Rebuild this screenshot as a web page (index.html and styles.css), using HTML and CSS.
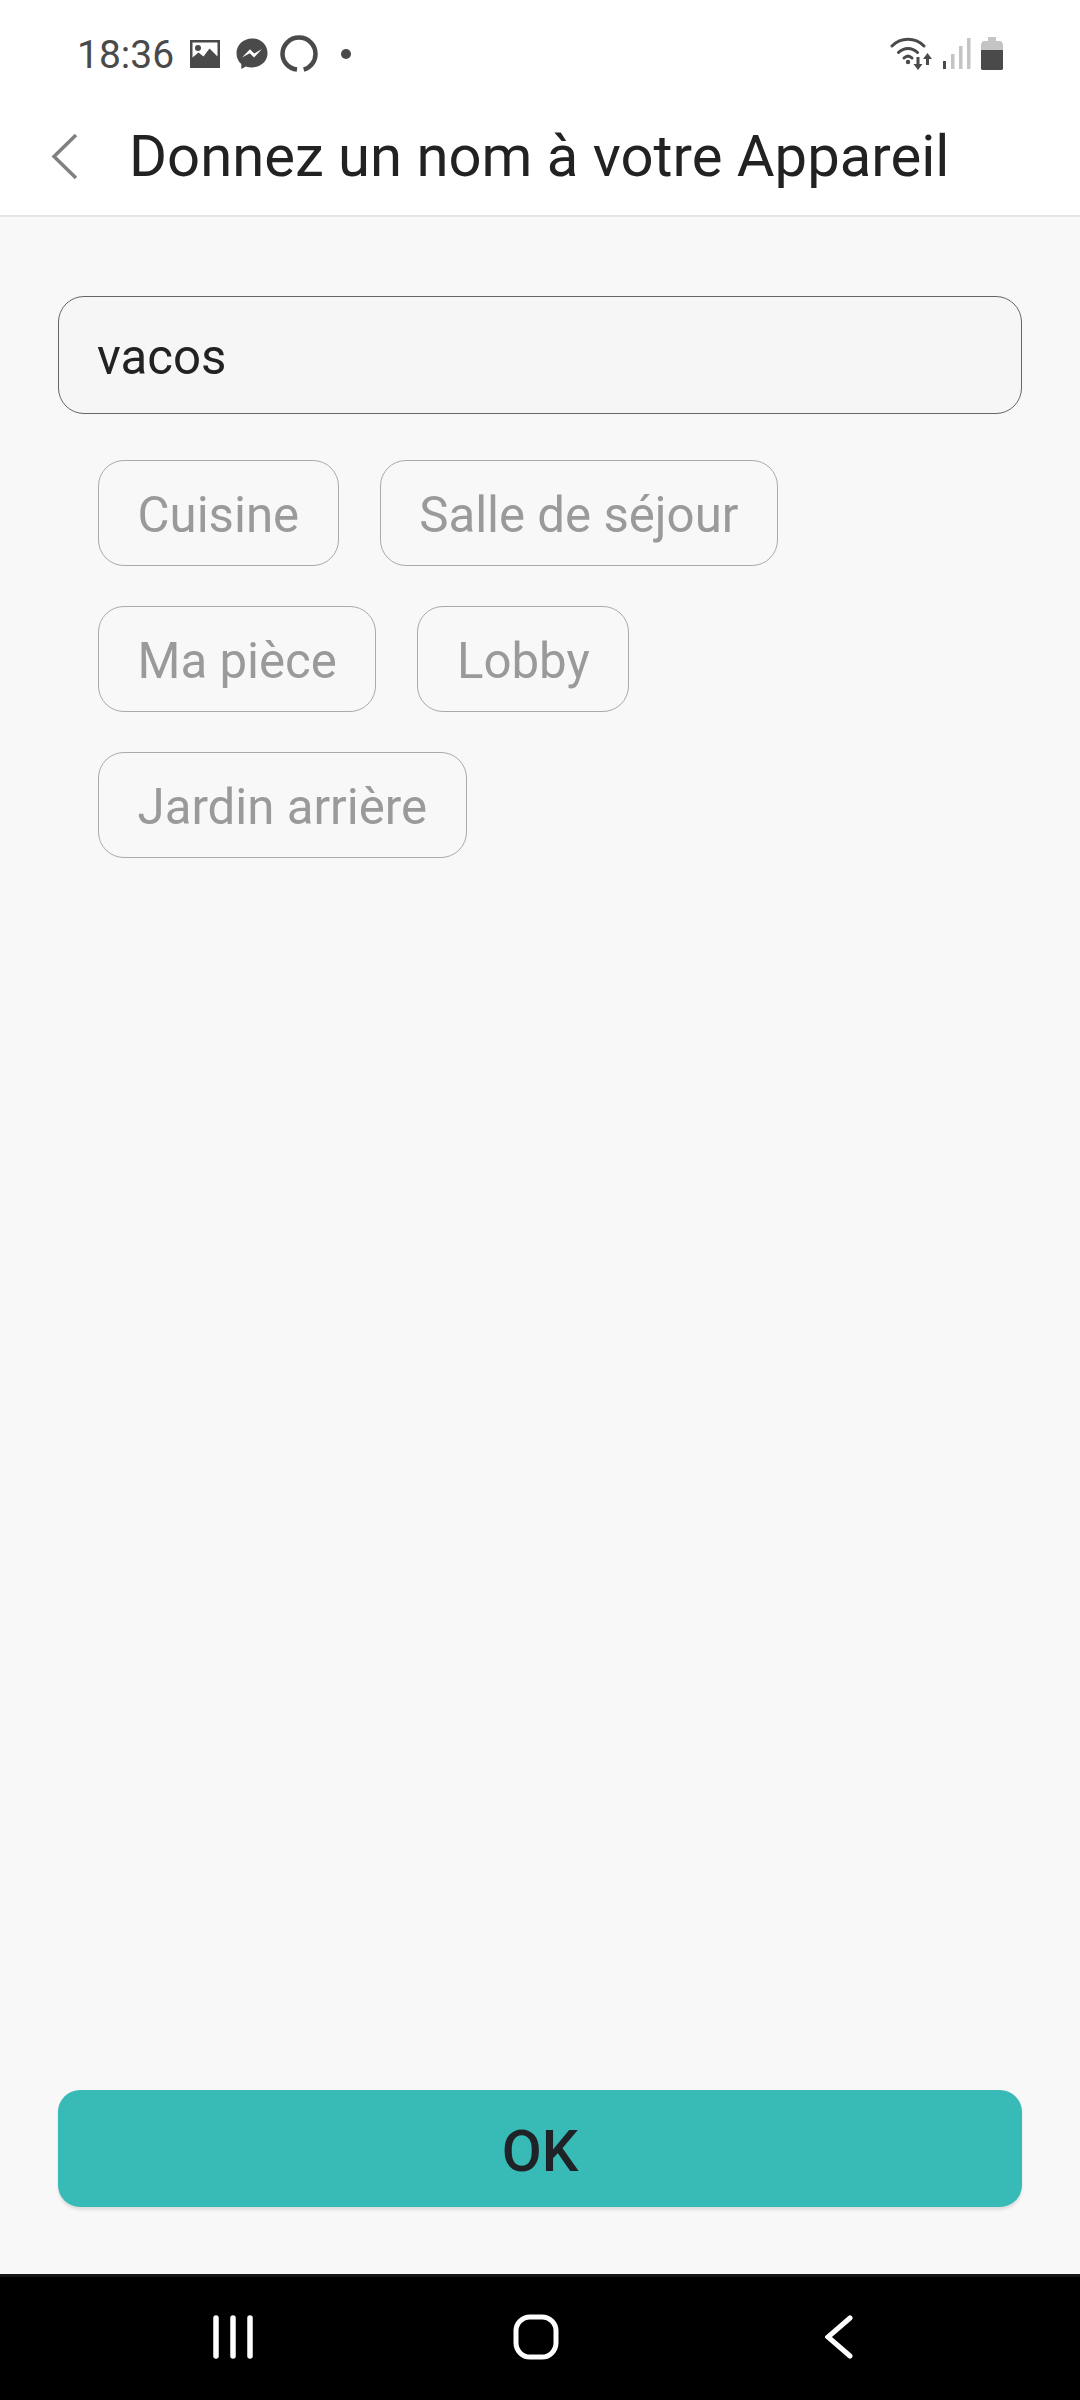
FILE: index.html
```html
<!DOCTYPE html>
<html lang="fr">
<head>
<meta charset="UTF-8" />
<meta name="viewport" content="width=device-width,initial-scale=1" />
<title>Donnez un nom à votre Appareil</title>
<link rel="stylesheet" href="styles.css">
</head>
<body>
<div class="status">
  <span class="clock">18:36</span>
  <svg class="ic-photo" width="32" height="30" viewBox="0 0 32 30">
    <path fill="#4a4a4a" fill-rule="evenodd" d="M1 1h30v28H1zM3.500 3.500v15l6-5 5 4 6-8 8 8v-14z"/>
    <circle cx="9" cy="9" r="3" fill="#4a4a4a"/>
  </svg>
  <svg class="ic-msg" width="32" height="32" viewBox="0 0 32 32">
    <path fill="#4a4a4a" d="M16 .5C7.200.5.500 6.900.500 15.300c0 4.400 1.800 8.200 4.800 10.800V31l4.600-2.500c1.900.6 3.900.9 6.100.9 8.800 0 15.500-6.200 15.500-14.100C31.500 6.900 24.800.5 16 .5z"/>
    <path fill="#fff" d="M6 19.500l8-8.300 4.200 4.200 7.800-4.300-8 8.400-4.200-4.300z"/>
  </svg>
  <svg class="ic-ring" width="38" height="38" viewBox="0 0 38 38">
    <path fill="none" stroke="#4a4a4a" stroke-width="4.500" d="M17 34.500C8.700 33.500 2.500 27 2.500 19 2.500 9.900 9.900 2.500 19 2.500S35.500 9.900 35.500 19c0 7.500-5 13.700-11.800 15.700"/>
  </svg>
  <span class="dot"></span>
  <div class="status-right">
    <svg width="43" height="34" viewBox="0 0 43 34">
      <g fill="none" stroke="#4a4a4a" stroke-width="3" stroke-linecap="round">
        <path d="M2 9C11 0 25 0 34 9"/>
        <path d="M8.500 15.500c5.500-5.500 13.500-5.500 19 0"/>
        <path d="M14 21c2.500-2.500 5.500-2.500 8 0"/>
      </g>
      <circle cx="18" cy="25" r="2.200" fill="#4a4a4a"/>
      <path fill="#4a4a4a" d="M26.500 20h3v7h3l-4.500 6-4.500-6h3zM37.500 16l4.500 6h-3v6h-3v-6h-3z"/>
    </svg>
    <svg width="30" height="34" viewBox="0 0 30 34">
      <rect x="1" y="24" width="3" height="8" fill="#4a4a4a"/>
      <rect x="9" y="17" width="3.500" height="15" fill="#c4c4c4"/>
      <rect x="17" y="9" width="3.500" height="23" fill="#c4c4c4"/>
      <rect x="25" y="1" width="3.500" height="31" fill="#c4c4c4"/>
    </svg>
    <svg width="22" height="34" viewBox="0 0 22 34">
      <path fill="#c4c4c4" d="M7 0h8v4h5l2 3v8H0V7l2-3h5z"/>
      <path fill="#4a4a4a" d="M0 13h22v19l-1 1H1l-1-1z"/>
    </svg>
  </div>
</div>
<header class="topbar">
  <svg class="back" width="28" height="48" viewBox="0 0 28 48">
    <path fill="none" stroke="#808080" stroke-width="3.500" d="M26 3L4 24.500 26 46"/>
  </svg>
  <h1>Donnez un nom à votre Appareil</h1>
</header>
<main class="content">
  <div class="name-input">vacos</div>
  <div class="chips">
    <div class="chip">Cuisine</div>
    <div class="chip">Salle de séjour</div>
    <div class="chip">Ma pièce</div>
    <div class="chip">Lobby</div>
    <div class="chip">Jardin arrière</div>
  </div>
  <button class="ok" type="button">OK</button>
</main>
<nav class="navbar">
  <svg width="42" height="44" viewBox="0 0 42 44">
    <g stroke="#fff" stroke-width="5.500" stroke-linecap="round">
      <path d="M4 3v38"/>
      <path d="M21 3v38"/>
      <path d="M38 3v38"/>
    </g>
  </svg>
  <svg width="46" height="46" viewBox="0 0 46 46">
    <rect x="3" y="3" width="40" height="40" rx="14" fill="none" stroke="#fff" stroke-width="5"/>
  </svg>
  <svg width="28" height="44" viewBox="0 0 28 44">
    <path fill="none" stroke="#fff" stroke-width="5" stroke-linecap="round" stroke-linejoin="miter" d="M25 3L3 22l22 19"/>
  </svg>
</nav>
</body>
</html>
```

FILE: styles.css
```css
* {
  box-sizing: border-box;
}
body {
  margin: 0;
  width: 1080px;
  height: 2400px;
  display: flex;
  flex-direction: column;
  font-family: Roboto, sans-serif;
  background: #f8f8f8;
}
.status {
  height: 84px;
  padding: 24px 0 0 77px;
  display: flex;
  align-items: center;
  background: #fff;
}
.clock {
  font-size: 39px;
  line-height: 44px;
  padding-top: 2px;
  color: #4a4a4a;
  margin-right: 15px;
}
.ic-photo {
  margin-right: 15px;
}
.ic-msg {
  margin-right: 12px;
}
.ic-ring {
  margin-right: 23px;
}
.dot {
  width: 10px;
  height: 10px;
  border-radius: 50%;
  background: #4a4a4a;
}
.status-right {
  margin-left: auto;
  margin-right: 77px;
  display: flex;
  align-items: center;
  gap: 9px;
}
.topbar {
  height: 133px;
  display: flex;
  align-items: center;
  padding: 12px 0 0 50px;
  background: #fff;
  border-bottom: 2px solid #e6e6e6;
}
.back {
  flex-shrink: 0;
  margin-right: 51px;
}
h1 {
  margin: 0;
  font-size: 58px;
  font-weight: 400;
  color: #222;
  white-space: nowrap;
}
.content {
  flex: 1;
  display: flex;
  flex-direction: column;
  padding: 79px 58px 67px;
}
.name-input {
  height: 118px;
  display: flex;
  align-items: center;
  padding: 3px 38px 0;
  font-size: 49.2px;
  color: #222;
  background: #f6f6f6;
  border: 1.5px solid #666;
  border-radius: 26px;
}
.chips {
  display: flex;
  flex-wrap: wrap;
  gap: 40px 41px;
  padding: 46px 0 0 40px;
}
.chip {
  height: 106px;
  padding: 4px 38.5px 0;
  display: flex;
  align-items: center;
  font-size: 49.2px;
  color: #9a9a9a;
  border: 1.5px solid #aaa;
  border-radius: 26px;
}
.ok {
  margin-top: auto;
  height: 117px;
  padding: 4px 0 0;
  font-family: inherit;
  font-size: 58px;
  font-weight: 500;
  color: #1f2226;
  background: #38bab6;
  border: none;
  border-radius: 22px;
  box-shadow: 0 3px 3px rgba(0,0,0,0.1);
}
.navbar {
  height: 126px;
  display: grid;
  grid-template-columns: repeat(3, 1fr);
  justify-items: center;
  align-items: center;
  padding: 0 90px 3px 82px;
  background: #000;
  border-top: 3px solid #161616;
}
```
